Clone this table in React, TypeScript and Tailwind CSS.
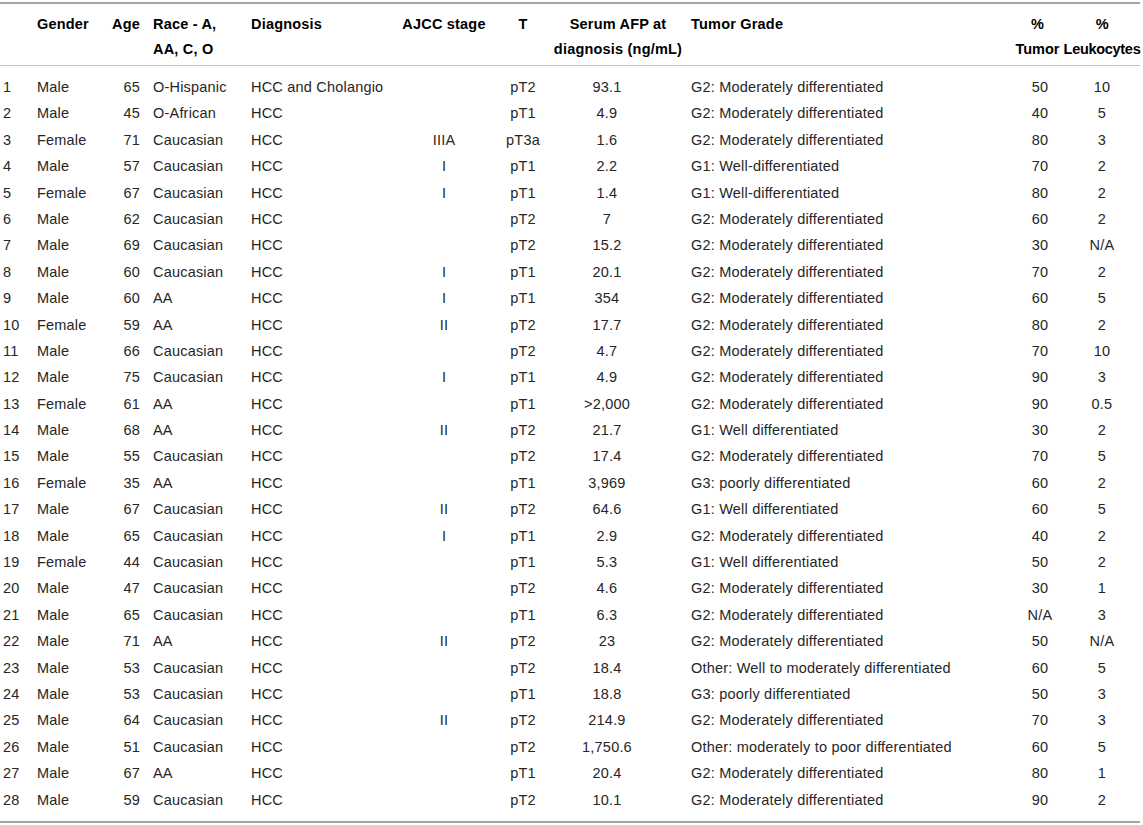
import React from "react";

type Row = [string, string, string, string, string, string, string, string, string, string, string];

const G2 = "G2: Moderately differentiated";
const rows: Row[] = [
  ["1", "Male", "65", "O-Hispanic", "HCC and Cholangio", "", "pT2", "93.1", G2, "50", "10"],
  ["2", "Male", "45", "O-African", "HCC", "", "pT1", "4.9", G2, "40", "5"],
  ["3", "Female", "71", "Caucasian", "HCC", "IIIA", "pT3a", "1.6", G2, "80", "3"],
  ["4", "Male", "57", "Caucasian", "HCC", "I", "pT1", "2.2", "G1: Well-differentiated", "70", "2"],
  ["5", "Female", "67", "Caucasian", "HCC", "I", "pT1", "1.4", "G1: Well-differentiated", "80", "2"],
  ["6", "Male", "62", "Caucasian", "HCC", "", "pT2", "7", G2, "60", "2"],
  ["7", "Male", "69", "Caucasian", "HCC", "", "pT2", "15.2", G2, "30", "N/A"],
  ["8", "Male", "60", "Caucasian", "HCC", "I", "pT1", "20.1", G2, "70", "2"],
  ["9", "Male", "60", "AA", "HCC", "I", "pT1", "354", G2, "60", "5"],
  ["10", "Female", "59", "AA", "HCC", "II", "pT2", "17.7", G2, "80", "2"],
  ["11", "Male", "66", "Caucasian", "HCC", "", "pT2", "4.7", G2, "70", "10"],
  ["12", "Male", "75", "Caucasian", "HCC", "I", "pT1", "4.9", G2, "90", "3"],
  ["13", "Female", "61", "AA", "HCC", "", "pT1", ">2,000", G2, "90", "0.5"],
  ["14", "Male", "68", "AA", "HCC", "II", "pT2", "21.7", "G1: Well differentiated", "30", "2"],
  ["15", "Male", "55", "Caucasian", "HCC", "", "pT2", "17.4", G2, "70", "5"],
  ["16", "Female", "35", "AA", "HCC", "", "pT1", "3,969", "G3: poorly differentiated", "60", "2"],
  ["17", "Male", "67", "Caucasian", "HCC", "II", "pT2", "64.6", "G1: Well differentiated", "60", "5"],
  ["18", "Male", "65", "Caucasian", "HCC", "I", "pT1", "2.9", G2, "40", "2"],
  ["19", "Female", "44", "Caucasian", "HCC", "", "pT1", "5.3", "G1: Well differentiated", "50", "2"],
  ["20", "Male", "47", "Caucasian", "HCC", "", "pT2", "4.6", G2, "30", "1"],
  ["21", "Male", "65", "Caucasian", "HCC", "", "pT1", "6.3", G2, "N/A", "3"],
  ["22", "Male", "71", "AA", "HCC", "II", "pT2", "23", G2, "50", "N/A"],
  ["23", "Male", "53", "Caucasian", "HCC", "", "pT2", "18.4", "Other: Well to moderately differentiated", "60", "5"],
  ["24", "Male", "53", "Caucasian", "HCC", "", "pT1", "18.8", "G3: poorly differentiated", "50", "3"],
  ["25", "Male", "64", "Caucasian", "HCC", "II", "pT2", "214.9", G2, "70", "3"],
  ["26", "Male", "51", "Caucasian", "HCC", "", "pT2", "1,750.6", "Other: moderately to poor differentiated", "60", "5"],
  ["27", "Male", "67", "AA", "HCC", "", "pT1", "20.4", G2, "80", "1"],
  ["28", "Male", "59", "Caucasian", "HCC", "", "pT2", "10.1", G2, "90", "2"],
];

const GRID =
  "grid grid-cols-[34px_76px_40px_98px_147px_98px_60px_130px_327px_56px_74px]";

const cellCls = [
  "pl-[3px] text-left",
  "pl-[3px] text-left",
  "pr-[10px] text-right",
  "pl-[3px] text-left",
  "pl-[3px] text-left",
  "text-center",
  "text-center",
  "pr-[22px] text-center",
  "pl-[8px] text-left",
  "pl-[4px] text-center",
  "pr-[2px] text-center",
];

export default function App() {
  return (
    <div
      className="w-[1143px] h-[825px] bg-white pt-[2px] text-[14.5px] tracking-[0.2px] text-[#262626]"
      style={{ fontFamily: '"Liberation Sans", Arial, Helvetica, sans-serif' }}
    >
      <div className="w-[1140px] border-t-2 border-b-2 border-[#a6a6a6]">
        {/* header */}
        <div className={`${GRID} border-b border-[#c4c4c4] pt-[8px] pb-[3px] font-bold leading-[25px] text-black`}>
          <div className="pl-[3px]"></div>
          <div className="pl-[3px]">Gender</div>
          <div className="pr-[10px] text-right">Age</div>
          <div className="pl-[3px] whitespace-nowrap">
            Race - A,
            <br />
            AA, C, O
          </div>
          <div className="pl-[3px]">Diagnosis</div>
          <div className="flex justify-center whitespace-nowrap">AJCC stage</div>
          <div className="text-center">T</div>
          <div className="flex flex-col items-center whitespace-nowrap">
            <span>Serum AFP at</span>
            <span>diagnosis (ng/mL)</span>
          </div>
          <div className="pl-[8px]">Tumor Grade</div>
          <div className="flex flex-col items-center whitespace-nowrap pr-[1px] tracking-normal">
            <span>%</span>
            <span>Tumor</span>
          </div>
          <div className="flex flex-col items-center whitespace-nowrap pr-[2px] tracking-[-0.3px]">
            <span>%</span>
            <span>Leukocytes</span>
          </div>
        </div>
        {/* body */}
        <div className="pt-[8px] pb-[8px]">
          {rows.map((r) => (
            <div key={r[0]} className={`${GRID} h-[26.4px] leading-[26.4px]`}>
              {r.map((c, i) => (
                <div key={i} className={`${cellCls[i]} whitespace-nowrap`}>
                  {c}
                </div>
              ))}
            </div>
          ))}
        </div>
      </div>
    </div>
  );
}
